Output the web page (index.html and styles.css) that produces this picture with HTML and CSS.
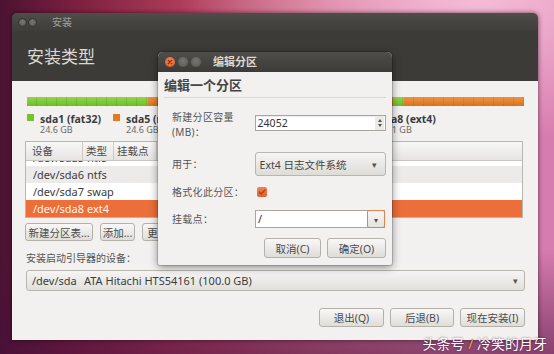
FILE: index.html
```html
<!DOCTYPE html>
<html>
<head>
<meta charset="utf-8">
<link rel="stylesheet" href="styles.css">
</head>
<body>
<div class="desktop">
  <div class="window">
    <div class="titlebar">
      <span class="wbtn"></span><span class="wbtn"></span>
      <span class="wtitle">安装</span>
    </div>
    <div class="header"><h1>安装类型</h1></div>
    <div class="content">
      <div class="bar">
        <span class="seg green" style="width:121px"></span>
        <span class="seg orange" style="width:245px"></span>
        <span class="seg green" style="width:11px"></span>
        <span class="seg orange grow"></span>
      </div>
      <div class="legend">
        <div class="litem"><span class="sw green"></span><div class="ltext"><b>sda1 (fat32)</b><small>24.6 GB</small></div></div>
        <div class="litem"><span class="sw orange"></span><div class="ltext"><b>sda5 (ntfs)</b><small>24.6 GB</small></div></div>
        <div class="litem"><span class="sw green"></span><div class="ltext"><b>sda6 (ntfs)</b><small>24.6 GB</small></div></div>
        <div class="litem"><span class="sw orange"></span><div class="ltext"><b>sda7 (linux-swap)</b><small>2.1 GB</small></div></div>
        <div class="litem last"><span class="sw orange"></span><div class="ltext"><b>sda8 (ext4)</b><small>24.1 GB</small></div></div>
      </div>
      <div class="table">
        <div class="thead">
          <span class="c1">设备</span><span class="c2">类型</span><span class="c3">挂载点</span><span class="c4"></span><span class="c5"></span><span class="c6"></span>
        </div>
        <div class="tbody">
          <div class="row partial"><span class="c1">/dev/sda5</span><span class="c2">ntfs</span></div>
          <div class="row alt"><span class="c1">/dev/sda6</span><span class="c2">ntfs</span></div>
          <div class="row"><span class="c1">/dev/sda7</span><span class="c2">swap</span></div>
          <div class="row sel"><span class="c1">/dev/sda8</span><span class="c2">ext4</span></div>
        </div>
      </div>
      <div class="tools">
        <span class="btn w68">新建分区表...</span>
        <span class="btn w35">添加...</span>
        <span class="btn w40">更改...</span>
      </div>
      <div class="blabel">安装启动引导器的设备：</div>
      <div class="combo">
        <span class="dev">/dev/sda</span><span class="disk">ATA Hitachi HTS54161 (100.0 GB)</span>
        <span class="arrow">▾</span>
      </div>
      <div class="actions">
        <span class="btn w65">退出(Q)</span>
        <span class="btn w64">后退(B)</span>
        <span class="btn w65">现在安装(I)</span>
      </div>
    </div>
  </div>

  <div class="dialog">
    <div class="dtitlebar">
      <span class="dbtn close"><svg width="10" height="10" viewBox="0 0 10 10"><path d="M3.3 3.3L6.7 6.7M6.7 3.3L3.3 6.7" stroke="#7a2a10" stroke-width="1.2" stroke-linecap="round"/></svg></span>
      <span class="dbtn"></span><span class="dbtn"></span>
      <span class="dtitle">编辑分区</span>
    </div>
    <div class="dbody">
      <div class="dhead">编辑一个分区</div>
      <div class="form">
        <div class="frow r1">
          <div class="flabel">新建分区容量<br>(MB)：</div>
          <div class="spin"><span>24052</span><span class="spinarrows"><i class="up"></i><i class="down"></i></span></div>
        </div>
        <div class="frow r2">
          <div class="flabel">用于：</div>
          <div class="dcombo"><span>Ext4 日志文件系统</span><span class="arrow">▾</span></div>
        </div>
        <div class="frow r3">
          <div class="flabel">格式化此分区：</div>
          <span class="check"><svg width="10" height="10" viewBox="0 0 10 10"><path d="M2.4 5.2L4.3 7L7.8 3" fill="none" stroke="#b5451c" stroke-width="1.6" stroke-linecap="round" stroke-linejoin="round"/></svg></span>
        </div>
        <div class="frow r4">
          <div class="flabel">挂载点：</div>
          <div class="mentry"><span class="mtext">/</span><span class="mbtn">▾</span></div>
        </div>
        <div class="dactions">
          <span class="btn dw57">取消(C)</span>
          <span class="btn dw59">确定(O)</span>
        </div>
      </div>
    </div>
  </div>

  <div class="watermark">头条号 <span class="slash">/</span> 冷笑的月牙</div>
</div>
</body>
</html>
```

FILE: styles.css
```css
* { box-sizing: border-box; margin: 0; padding: 0; }
html, body { width: 554px; height: 354px; overflow: hidden; }
body {
  font-family: "Noto Sans", "Noto Sans CJK SC", sans-serif;
  font-size: 11px;
  color: #3c3c3c;
  background:
    linear-gradient(180deg, rgba(0,0,0,0) 70%, rgba(70,15,60,0.55) 100%),
    radial-gradient(ellipse 300px 140px at 480px 0px, rgba(246,190,215,0.95), rgba(246,190,215,0) 100%),
    linear-gradient(90deg, #4c1332 0%, #7e2040 14%, #b03e5c 34%, #cc6a88 58%, #dc86aa 80%, #d77cb0 100%);
}
.desktop {
  position: relative;
  width: 554px;
  height: 354px;
  padding: 13px 16px 0 12px;
}

/* main window */
.window {
  width: 526px;
  height: 327px;
  display: flex;
  flex-direction: column;
  border-radius: 5px 5px 0 0;
  overflow: hidden;
  box-shadow: 0 0 5px rgba(20,0,15,0.6);
}
.titlebar {
  height: 18px;
  display: flex;
  align-items: center;
  padding-left: 6px;
  background: linear-gradient(#4e4d49, #3e3d39);
}
.wbtn {
  width: 9px; height: 9px;
  border-radius: 50%;
  background: radial-gradient(circle at 50% 40%, #77756f, #5a5954);
  border: 1px solid #34332f;
  margin-right: 1px;
}
.wtitle {
  margin-left: 14px;
  font-size: 10px;
  color: #a29f99;
  line-height: 12px;
}
.header {
  height: 50px;
  background: #3c3b37;
  padding: 16px 0 0 15px;
}
.header h1 {
  font-size: 17px;
  font-weight: normal;
  line-height: 20px;
  color: #dcd8d0;
}
.content {
  flex: 1;
  background: #f2f1f0;
  padding: 16px 14px 0 13px;
  display: flex;
  flex-direction: column;
}

/* partition bar */
.bar {
  height: 9px;
  margin-left: 2px;
  display: flex;
}
.seg { height: 100%; }
.seg.grow { flex: 1; }
.seg.green {
  background:
    repeating-linear-gradient(90deg, rgba(0,0,0,0) 0 9px, rgba(60,110,10,0.18) 9px 10px),
    linear-gradient(#92d64a, #6fbd27);
}
.seg.orange {
  background:
    repeating-linear-gradient(90deg, rgba(0,0,0,0) 0 9px, rgba(140,60,10,0.15) 9px 10px),
    linear-gradient(#ef9240, #d9741f);
}
.legend {
  margin-top: 7px;
  padding-left: 2px;
  display: flex;
  gap: 12px;
  height: 22px;
}
.litem { display: flex; gap: 6px; }
.litem.last { margin-left: -22px; }
.sw { width: 7px; height: 7px; margin-top: 1px; }
.sw.green { background: #75c42a; }
.sw.orange { background: #e37a22; }
.ltext b {
  display: block;
  font-size: 10.5px;
  line-height: 12px;
  font-weight: bold;
  color: #3c3c3c;
  white-space: nowrap;
}
.ltext small {
  display: block;
  font-size: 9px;
  line-height: 10px;
  color: #6a6a6a;
}

/* table */
.table {
  margin-top: 6px;
  margin-right: 1px;
  border: 1px solid #b9b6b0;
  background: #fff;
}
.thead {
  height: 19px;
  display: flex;
  background: linear-gradient(#f7f7f6, #e6e5e2);
  border-bottom: 1px solid #c9c7c2;
  font-size: 10.5px;
  line-height: 18px;
  color: #4a4a4a;
}
.thead span { border-right: 1px solid #cbc9c4; white-space: nowrap; overflow: hidden; }
.thead .c1 { width: 57px; padding-left: 6px; }
.thead .c2 { width: 31px; padding-left: 3px; }
.thead .c3 { width: 43px; padding-left: 3px; }
.thead .c4 { width: 60px; }
.thead .c5 { width: 60px; }
.thead .c6 { flex: 1; border-right: 0; }
.tbody {
  height: 56px;
  overflow: hidden;
}
.row {
  height: 17px;
  line-height: 17px;
  display: flex;
  font-size: 11px;
  color: #3c3c3c;
}
.row.partial { margin-top: -12px; }
.row.alt { background: #ecebea; }
.row.sel { background: #ec6e39; color: #fff4ee; }
.row .c1 { width: 57px; padding-left: 7px; }
.row .c2 { padding-left: 4px; }

/* buttons */
.btn {
  display: inline-flex;
  align-items: center;
  justify-content: center;
  border: 1px solid #b4b1ab;
  border-radius: 3px;
  background: linear-gradient(#f9f8f7, #dfddd8);
  font-size: 10.5px;
  color: #4b4b4b;
  white-space: nowrap;
  overflow: hidden;
}
.tools {
  margin-top: 5px;
  display: flex;
  gap: 7px;
  height: 18px;
}
.w68 { width: 68px; }
.w35 { width: 35px; }
.w40 { width: 40px; }
.blabel {
  margin-top: 10px;
  padding-left: 1px;
  font-size: 10px;
  line-height: 14px;
  color: #555;
}
.combo {
  margin: 5px -1px 0 1px;
  height: 21px;
  display: flex;
  align-items: center;
  padding: 0 6px 0 5px;
  border: 1px solid #b9b6b0;
  border-radius: 3px;
  background: linear-gradient(#f6f5f4, #e2e0dc);
  font-size: 11px;
  color: #3c3c3c;
}
.combo .dev { width: 52px; }
.combo .disk { flex: 1; }
.arrow { font-size: 9px; color: #555; }
.actions {
  margin: 17px -1px 0 0;
  display: flex;
  justify-content: flex-end;
  gap: 6px;
  height: 19px;
}
.w65 { width: 65px; }
.w64 { width: 64px; }

/* dialog */
.dialog {
  position: absolute;
  left: 158px;
  top: 52px;
  width: 234px;
  height: 213px;
  border-radius: 5px 5px 2px 2px;
  background: #f2f1f0;
  box-shadow: 0 2px 8px rgba(0,0,0,0.45), 0 0 0 1px rgba(0,0,0,0.15);
  overflow: hidden;
}
.dtitlebar {
  height: 20px;
  display: flex;
  align-items: center;
  padding-left: 7px;
  gap: 3px;
  background: linear-gradient(#4f4e4a, #3c3b37);
}
.dbtn {
  width: 10px; height: 10px;
  border-radius: 50%;
  background: radial-gradient(circle at 50% 40%, #77756f, #595853);
  display: flex;
}
.dbtn.close { background: radial-gradient(circle at 50% 40%, #f58a52, #e0541c); }
.dtitle {
  margin-left: 9px;
  font-size: 11px;
  font-weight: bold;
  color: #dcd8d0;
  line-height: 14px;
}
.dbody { padding: 4px 6px 0 6px; }
.dhead {
  font-size: 13px;
  font-weight: bold;
  line-height: 18px;
  color: #454545;
  padding-bottom: 3px;
  border-bottom: 1px solid #d9d7d3;
}
.form { padding: 12px 0 0 8px; }
.frow { display: flex; }
.flabel {
  width: 83px;
  font-size: 10px;
  letter-spacing: 0.3px;
  color: #555;
  line-height: 15px;
}
.r1 .spin { margin-top: 5px; }
.spin {
  width: 132px;
  height: 16px;
  border: 1px solid #a9a6a0;
  background: #fff;
  box-shadow: inset 0 1px 1px rgba(0,0,0,0.08);
  display: flex;
  align-items: center;
  justify-content: space-between;
  padding-left: 2px;
  font-size: 10.5px;
  color: #333;
}
.spinarrows {
  width: 9px;
  height: 14px;
  display: flex;
  flex-direction: column;
  justify-content: center;
  align-items: center;
  gap: 2px;
  margin-right: 1px;
  background: #eceae7;
}
.spinarrows i { width: 0; height: 0; border-left: 2.5px solid transparent; border-right: 2.5px solid transparent; }
.spinarrows .up { border-bottom: 3px solid #555; }
.spinarrows .down { border-top: 3px solid #555; }
.r2 { margin-top: 12px; align-items: center; }
.dcombo {
  width: 132px;
  height: 24px;
  border: 1px solid #b9b6b0;
  border-radius: 3px;
  background: linear-gradient(#f6f5f4, #dedcd7);
  display: flex;
  align-items: center;
  justify-content: space-between;
  padding: 0 8px 0 4px;
  font-size: 10.5px;
  color: #444;
}
.r3 { margin-top: 8px; height: 16px; align-items: center; }
.check {
  width: 10px;
  height: 10px;
  margin-left: 2px;
  border-radius: 2px;
  background: linear-gradient(#f28252, #e0622d);
  border: 0;
  display: flex;
}
.r4 { margin-top: 10px; align-items: center; }
.mentry {
  width: 130px;
  height: 18px;
  display: flex;
  border: 1px solid #a9a6a0;
  background: #fff;
}
.mtext { flex: 1; padding-left: 2px; font-size: 11px; line-height: 16px; color: #333; }
.mbtn {
  width: 18px;
  margin: -1px -1px -1px 0;
  border: 1px solid #e3804f;
  border-radius: 2px;
  background: linear-gradient(#f8f7f6, #e4e2de);
  font-size: 8px;
  color: #555;
  display: flex;
  align-items: center;
  justify-content: center;
}
.dactions {
  margin-top: 10px;
  display: flex;
  justify-content: flex-end;
  gap: 6px;
  height: 20px;
  padding-right: 0;
}
.dw57 { width: 57px; }
.dw59 { width: 59px; }

.watermark {
  position: absolute;
  right: 7px;
  bottom: 1px;
  font-size: 14px;
  line-height: 18px;
  color: #fff;
  text-shadow: 0 0 2px rgba(60,10,40,0.8);
}
.watermark .slash { color: #f2a43a; }
```
